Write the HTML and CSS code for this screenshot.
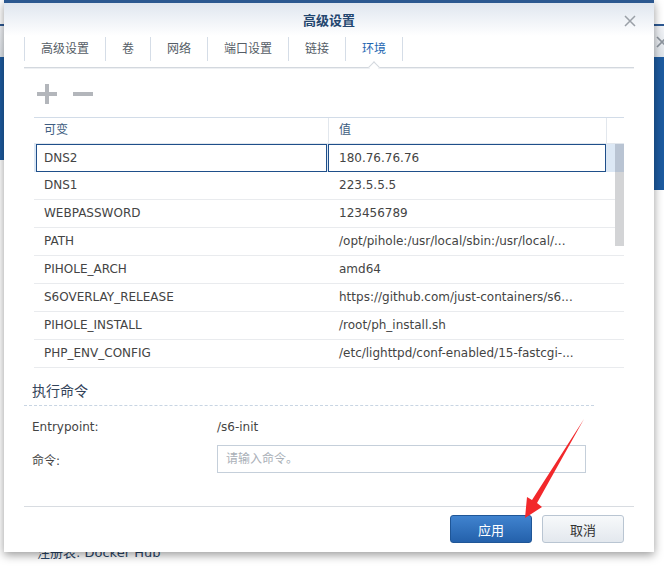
FILE: index.html
```html
<!DOCTYPE html>
<html lang="zh-CN">
<head>
    <meta charset="UTF-8">
    <meta name="viewport" content="width=device-width, initial-scale=1.0">
    <title>高级设置</title>
    <link rel="stylesheet" href="styles.css">
</head>
<body>
<div class="desk">

    <!-- window behind the dialog -->
    <div class="backwin">
        <div class="backwin__head">
            <svg class="backwin__close" width="12" height="12" viewBox="0 0 12 12" aria-hidden="true">
                <path d="M1 1 L11 11 M11 1 L1 11" stroke="#8d959e" stroke-width="1.6" fill="none"/>
            </svg>
        </div>
        <div class="backwin__banner"></div>
        <div class="backwin__body">
            <p class="backwin__registry">注册表: Docker Hub</p>
        </div>
    </div>

    <div class="dialog" role="dialog" aria-labelledby="dialogTitle">
        <header class="dialog__head">
            <h1 class="dialog__title" id="dialogTitle">高级设置</h1>
            <button class="dialog__close" aria-label="关闭">
                <svg width="12" height="12" viewBox="0 0 12 12" aria-hidden="true">
                    <path d="M1 1 L11 11 M11 1 L1 11" stroke="#9aa0a7" stroke-width="1.5" fill="none"/>
                </svg>
            </button>
        </header>

        <nav class="tabs">
            <span class="tabs__item">高级设置</span>
            <span class="tabs__item">卷</span>
            <span class="tabs__item">网络</span>
            <span class="tabs__item">端口设置</span>
            <span class="tabs__item">链接</span>
            <span class="tabs__item tabs__item--active">环境</span>
        </nav>

        <div class="toolbar">
            <button class="toolbar__btn" aria-label="新增">
                <svg width="20" height="20" viewBox="0 0 20 20" aria-hidden="true">
                    <rect x="0" y="8" width="20" height="4" fill="#b3b6bb"/>
                    <rect x="8" y="0" width="4" height="20" fill="#b3b6bb"/>
                </svg>
            </button>
            <button class="toolbar__btn" aria-label="删除">
                <svg width="20" height="20" viewBox="0 0 20 20" aria-hidden="true">
                    <rect x="0" y="8" width="20" height="4" fill="#b3b6bb"/>
                </svg>
            </button>
        </div>

        <div class="grid">
            <div class="grid__head">
                <div class="grid__hcell grid__hcell--name">可变</div>
                <div class="grid__hcell grid__hcell--value">值</div>
                <div class="grid__hcell grid__hcell--scroll"></div>
            </div>
            <div class="grid__body">
                <div class="grid__row grid__row--editing">
                    <div class="grid__cell grid__cell--name">DNS2</div>
                    <div class="grid__cell grid__cell--value">180.76.76.76</div>
                </div>
                <div class="grid__row">
                    <div class="grid__cell grid__cell--name">DNS1</div>
                    <div class="grid__cell grid__cell--value">223.5.5.5</div>
                </div>
                <div class="grid__row">
                    <div class="grid__cell grid__cell--name">WEBPASSWORD</div>
                    <div class="grid__cell grid__cell--value">123456789</div>
                </div>
                <div class="grid__row">
                    <div class="grid__cell grid__cell--name">PATH</div>
                    <div class="grid__cell grid__cell--value" title="/opt/pihole:/usr/local/sbin:/usr/local/bin:/usr/sbin:/usr/bin:/sbin:/bin">/opt/pihole:/usr/local/sbin:/usr/local/...</div>
                </div>
                <div class="grid__row">
                    <div class="grid__cell grid__cell--name">PIHOLE_ARCH</div>
                    <div class="grid__cell grid__cell--value">amd64</div>
                </div>
                <div class="grid__row">
                    <div class="grid__cell grid__cell--name">S6OVERLAY_RELEASE</div>
                    <div class="grid__cell grid__cell--value" title="https://github.com/just-containers/s6-overlay/releases/download/v1.22.1.0/">https://github.com/just-containers/s6...</div>
                </div>
                <div class="grid__row">
                    <div class="grid__cell grid__cell--name">PIHOLE_INSTALL</div>
                    <div class="grid__cell grid__cell--value">/root/ph_install.sh</div>
                </div>
                <div class="grid__row">
                    <div class="grid__cell grid__cell--name">PHP_ENV_CONFIG</div>
                    <div class="grid__cell grid__cell--value" title="/etc/lighttpd/conf-enabled/15-fastcgi-php.conf">/etc/lighttpd/conf-enabled/15-fastcgi-...</div>
                </div>
                <div class="grid__thumb"></div>
            </div>
        </div>

        <section class="cmd">
            <h2 class="cmd__title">执行命令</h2>
            <div class="field field--first">
                <span class="field__label">Entrypoint:</span>
                <span class="field__value">/s6-init</span>
            </div>
            <div class="field">
                <label class="field__label" for="cmdInput">命令:</label>
                <input class="field__input" id="cmdInput" type="text" placeholder="请输入命令。">
            </div>
        </section>

        <footer class="dialog__foot">
            <button class="btn btn--primary">应用</button>
            <button class="btn">取消</button>
        </footer>
    </div>

    <!-- red annotation arrow drawn over the screenshot -->
    <svg class="arrow" width="664" height="566" viewBox="0 0 664 566" aria-hidden="true">
        <polygon points="584,419 537,503 542,507 525,518 527,497 532,500" fill="#f2282b"/>
    </svg>
</div>
</body>
</html>
```

FILE: styles.css
```css
/* ---------- base ---------- */
*,
*::before,
*::after {
    box-sizing: border-box;
}

body {
    margin: 0;
    font-family: "DejaVu Sans", "Noto Sans CJK SC", sans-serif;
    font-size: 12px;
    color: #444;
    background: #fff;
}

button {
    font: inherit;
    cursor: pointer;
}

.desk {
    position: relative;
    width: 664px;
    height: 566px;
    overflow: hidden;
}

/* ---------- window behind ---------- */
.backwin {
    position: absolute;
    top: 24px;
    left: 0;
    right: 0;
    bottom: 0;
    border-top: 2px solid #2d5993;
    background: #fff;
}

.backwin__head {
    display: flex;
    justify-content: flex-end;
    align-items: center;
    height: 31px;
    background: linear-gradient(#f2f4f7, #dfe4ea);
}

.backwin__close { margin-right: -4px; }

.backwin__banner {
    height: 103px;
    background: #1d5ba0;
}

.backwin__body {
    padding: 385px 0 0 37px;
    background: linear-gradient(#1d5ba0, #1d5ba0) right top / 12px 30px no-repeat;
}

.backwin__registry {
    margin: 0;
    font-size: 13px;
    line-height: 16px;
    color: #2a4566;
}

/* ---------- dialog ---------- */
.dialog {
    position: absolute;
    top: 0;
    left: 4px;
    z-index: 1;
    display: flex;
    flex-direction: column;
    width: 650px;
    height: 552px;
    background: #fff;
    border-top: 3px solid #2b5890;
    box-shadow: 0 3px 9px rgba(0, 0, 0, 0.4);
}

.dialog__head {
    position: relative;
    display: flex;
    align-items: center;
    justify-content: center;
    height: 33px;
    background: linear-gradient(#dfe6ef, #fff);
}

.dialog__title {
    margin: 0;
    font-size: 13px;
    font-weight: bold;
    color: #23466f;
}

.dialog__close {
    position: absolute;
    top: 12px;
    right: 18px;
    display: flex;
    padding: 0;
    border: none;
    background: transparent;
}

/* ---------- tabs ---------- */
.tabs {
    display: flex;
    height: 32px;
    margin: 0 20px;
    border-bottom: 1px solid #d3d8de;
    box-shadow: 0 1px 0 #eef0f3;
}

.tabs__item {
    position: relative;
    height: 24px;
    margin-top: 1px;
    padding: 0 16px;
    line-height: 24px;
    color: #555d66;
    border-right: 1px solid #d5dde7;
}

.tabs__item:first-child { border-left: 1px solid #d5dde7; }

.tabs__item--active { color: #2466b1; }

/* little notch under the active tab */
.tabs__item--active::after {
    content: "";
    position: absolute;
    left: 50%;
    bottom: -10px;
    width: 8px;
    height: 8px;
    margin-left: -4px;
    background: #fff;
    border-left: 1px solid #d3d8de;
    border-top: 1px solid #d3d8de;
    transform: rotate(45deg);
}

/* ---------- toolbar ---------- */
.toolbar {
    display: flex;
    align-items: center;
    gap: 16px;
    height: 49px;
    padding: 2px 0 0 33px;
}

.toolbar__btn {
    display: flex;
    padding: 0;
    border: none;
    background: transparent;
}

/* ---------- grid ---------- */
.grid {
    margin: 0 30px;
    border-top: 1px solid #d2dce8;
}

.grid__head {
    display: flex;
    height: 26px;
    border-bottom: 1px solid #e2e7ed;
}

.grid__hcell {
    line-height: 25px;
    padding-left: 10px;
    color: #3e5d81;
    border-right: 1px solid #e2e7ed;
}

.grid__hcell--name { width: 295px; }
.grid__hcell--value { width: 278px; }
.grid__hcell--scroll { width: 17px; border-right: none; }

.grid__body { position: relative; }

.grid__row {
    display: flex;
    height: 28px;
    line-height: 27px;
    border-bottom: 1px solid #e9ebee;
}

.grid__row:last-of-type { border-bottom: none; }

.grid__cell {
    padding-left: 10px;
    white-space: nowrap;
    overflow: hidden;
}

.grid__cell--name { width: 295px; }
.grid__cell--value { width: 278px; }

.grid__row--editing {
    line-height: 26px;
    background: #dce8f5;
    border-bottom: none;
}

.grid__row--editing .grid__cell {
    background: #fff;
    border: 1px solid #1f4f8a;
}

.grid__row--editing .grid__cell--name {
    width: 291px;
    margin-left: 2px;
    padding-left: 7px;
}

.grid__row--editing .grid__cell--value {
    width: 278px;
    margin-left: 1px;
}

.grid__thumb {
    position: absolute;
    top: 0;
    right: 0;
    width: 9px;
    height: 102px;
    background: linear-gradient(#b9c4d3 0 28px, #d3d4d6 28px);
}

/* ---------- command section ---------- */
.cmd {
    width: 570px;
    margin: 13px 0 0 20px;
}

.cmd__title {
    margin: 0;
    padding: 0 0 4px 8px;
    font-size: 14px;
    font-weight: normal;
    line-height: 20px;
    color: #33435a;
    border-bottom: 1px dashed #c8d5e3;
}

.field {
    display: flex;
    align-items: center;
    height: 28px;
    margin-top: 4px;
    padding-left: 8px;
}

.field--first { margin-top: 7px; }

.field__label { width: 185px; }

.field__input {
    width: 369px;
    height: 28px;
    padding: 0 8px;
    font: inherit;
    color: #444;
    border: 1px solid #c5cfda;
    outline: none;
}

.field__input::placeholder { color: #a9afb7; }

/* ---------- footer ---------- */
.dialog__foot {
    display: flex;
    justify-content: flex-end;
    gap: 10px;
    margin: auto 20px 0;
    padding: 8px 10px 9px;
    border-top: 1px solid #d8dce1;
}

.btn {
    width: 82px;
    height: 28px;
    font-size: 13px;
    color: #333;
    background: linear-gradient(#f7f9fb, #e3e8ee);
    border: 1px solid #b9c5d2;
    border-radius: 3px;
}

.btn--primary {
    color: #fff;
    background: linear-gradient(#4083cf, #2461ab);
    border-color: #1f5697;
}

/* ---------- annotation ---------- */
.arrow {
    position: absolute;
    top: 0;
    left: 0;
    z-index: 2;
    pointer-events: none;
}
```
